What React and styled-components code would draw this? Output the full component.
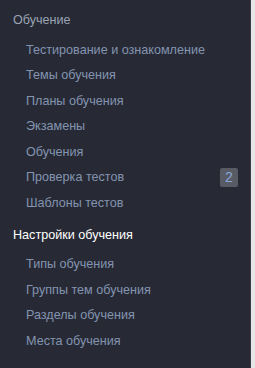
import styled, { createGlobalStyle } from 'styled-components';

const Global = createGlobalStyle`
  html, body { margin: 0; padding: 0; background: #e6e6e8; }
  body { font-family: "Liberation Sans", Arial, sans-serif; }
`

const S_page = styled.div`
  display: flex;
  height: 368px;
  overflow: hidden;
`
const S_nav = styled.nav`
  width: 251px;
  flex-shrink: 0;
  background: #272a35;
  border-right: solid 1px #3a3d47;
  padding: 11px 0 0 0;
  box-sizing: border-box;
`
const S_group = styled.div`
  display: flex;
  flex-direction: column;
  margin-bottom: 10px;
`
const S_title = styled.div`
  font-size: 12.6px;
  line-height: 18px;
  padding: 0 13px;
  color: ${({ $active }) => $active ? '#ffffff' : '#9ba3b4'};
  margin-bottom: 8px;
`
const S_item = styled.a`
  display: flex;
  align-items: center;
  justify-content: space-between;
  height: 25.5px;
  padding: 0 12px 0 26px;
  font-size: 12.6px;
  color: #8494b0;
  text-decoration: none;
`
const S_badge = styled.span`
  background: #585b63;
  color: #86a8dc;
  font-size: 14px;
  min-width: 18px;
  height: 19px;
  line-height: 19px;
  text-align: center;
  border-radius: 2px;
`

const groups = [
  {
    title: 'Обучение',
    items: [
      { label: 'Тестирование и ознакомление' },
      { label: 'Темы обучения' },
      { label: 'Планы обучения' },
      { label: 'Экзамены' },
      { label: 'Обучения' },
      { label: 'Проверка тестов', badge: 2 },
      { label: 'Шаблоны тестов' },
    ],
  },
  {
    title: 'Настройки обучения',
    active: true,
    items: [
      { label: 'Типы обучения' },
      { label: 'Группы тем обучения' },
      { label: 'Разделы обучения' },
      { label: 'Места обучения' },
    ],
  },
  {
    title: 'Отчёты',
    items: [],
  },
]

const App = () => {
  return (
    <>
      <Global />
      <S_page>
        <S_nav>
          {groups.map((g) => (
            <S_group key={g.title}>
              <S_title $active={g.active}>{g.title}</S_title>
              {g.items.map((it) => (
                <S_item key={it.label} href="#">
                  <span>{it.label}</span>
                  {it.badge && <S_badge>{it.badge}</S_badge>}
                </S_item>
              ))}
            </S_group>
          ))}
        </S_nav>
      </S_page>
    </>
  );
}

export default App;
